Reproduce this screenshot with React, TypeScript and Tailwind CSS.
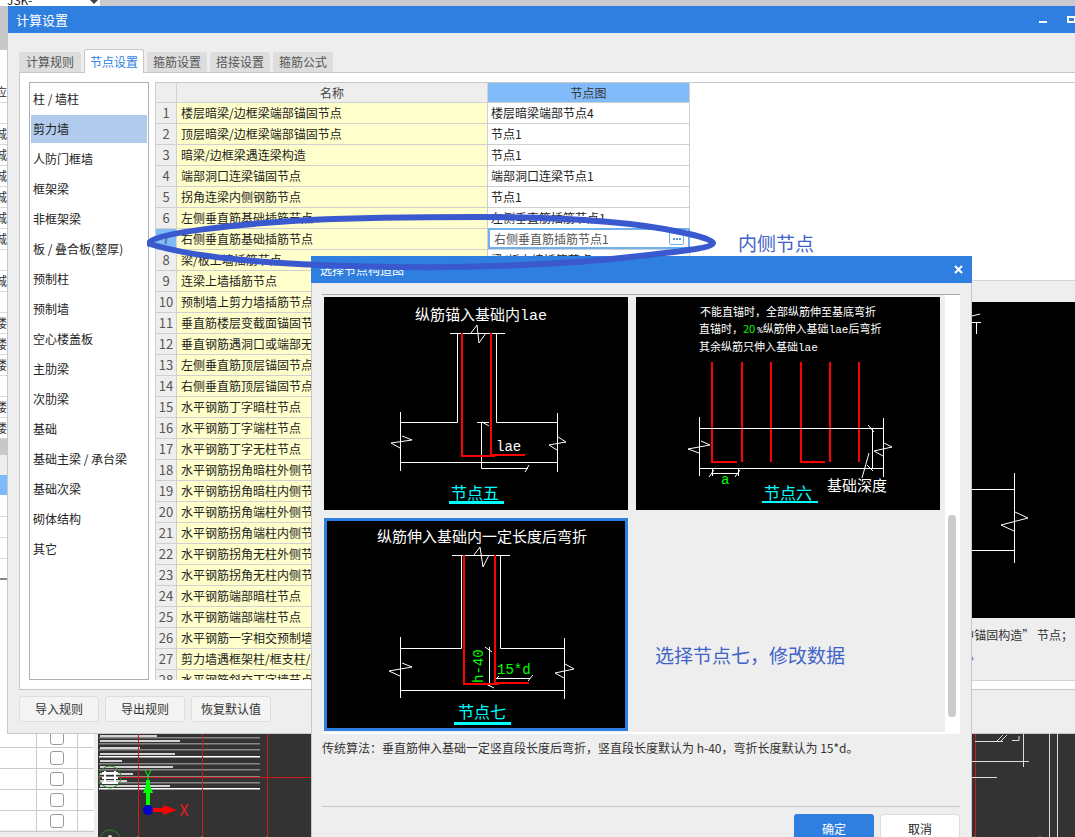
const leftRows = ["应", "", "城", "城", "城", "城", "城", "城", "", "城", "", "楼", "楼", "楼", "", "楼", "楼"];

const categories = [
  "柱 / 墙柱",
  "剪力墙",
  "人防门框墙",
  "框架梁",
  "非框架梁",
  "板 / 叠合板(整厚)",
  "预制柱",
  "预制墙",
  "空心楼盖板",
  "主肋梁",
  "次肋梁",
  "基础",
  "基础主梁 / 承台梁",
  "基础次梁",
  "砌体结构",
  "其它",
];

const nodeRows = [
  ["楼层暗梁/边框梁端部锚固节点", "楼层暗梁端部节点4"],
  ["顶层暗梁/边框梁端部锚固节点", "节点1"],
  ["暗梁/边框梁遇连梁构造", "节点1"],
  ["端部洞口连梁锚固节点", "端部洞口连梁节点1"],
  ["拐角连梁内侧钢筋节点", "节点1"],
  ["左侧垂直筋基础插筋节点", "左侧垂直筋插筋节点1"],
  ["右侧垂直筋基础插筋节点", "右侧垂直筋插筋节点1"],
  ["梁/板上墙插筋节点", "梁/板上墙插筋节点1"],
  ["连梁上墙插筋节点", "节点1"],
  ["预制墙上剪力墙插筋节点", "节点1"],
  ["垂直筋楼层变截面锚固节点", "节点1"],
  ["垂直钢筋遇洞口或端部无连梁节点", "节点1"],
  ["左侧垂直筋顶层锚固节点", "节点1"],
  ["右侧垂直筋顶层锚固节点", "节点1"],
  ["水平钢筋丁字暗柱节点", "节点1"],
  ["水平钢筋丁字端柱节点", "节点1"],
  ["水平钢筋丁字无柱节点", "节点1"],
  ["水平钢筋拐角暗柱外侧节点", "节点1"],
  ["水平钢筋拐角暗柱内侧节点", "节点1"],
  ["水平钢筋拐角端柱外侧节点", "节点1"],
  ["水平钢筋拐角端柱内侧节点", "节点1"],
  ["水平钢筋拐角无柱外侧节点", "节点1"],
  ["水平钢筋拐角无柱内侧节点", "节点1"],
  ["水平钢筋端部暗柱节点", "节点1"],
  ["水平钢筋端部端柱节点", "节点1"],
  ["水平钢筋一字相交预制墙节点", "节点1"],
  ["剪力墙遇框架柱/框支柱/端柱节点", "节点1"],
  ["水平钢筋斜交丁字墙节点", "节点1"],
];

const tabs = ["计算规则", "节点设置", "箍筋设置", "搭接设置", "箍筋公式"];

// legend rows in the cad drawing: [text bar y, text bar width, rule y, rule colour]
const legendRows: [number, number, number, string][] = [
  [735, 57, 737, "#888"],
  [740, 80, 743, "#888"],
  [747, 40, 749, "#888"],
  [753, 75, 756, "#fff"],
  [760, 22, 763, "#888"],
  [766, 73, 769, "#888"],
  [773, 33, 776, "#888"],
  [780, 27, 782, "#888"],
  [785, 70, 788, "#fff"],
];

const Lines = ({ stroke, width, items }: { stroke: string; width: number; items: string[] }) => (
  <g fill="none" stroke={stroke} strokeWidth={width}>
    {items.map((points) => (
      <polyline key={points} points={points} />
    ))}
  </g>
);

const NodeFive = () => (
  <svg width="304" height="213" viewBox="0 0 304 213" className="block bg-black">
    <text x="91" y="23" fill="#fff" fontSize="15" className="font-['Noto_Sans_CJK_SC',sans-serif]">纵筋锚入基础内<tspan className="font-['Liberation_Mono',monospace]">lae</tspan></text>
    <Lines
      stroke="#fff"
      width={1}
      items={[
        "126,36.5 181,36.5",
        "147,36 153,28 155,46 162,36",
        "133.5,36 133.5,125.5 76,125.5",
        "172.5,36 172.5,125.5 233,125.5",
        "76.5,115 76.5,174",
        "233.5,116 233.5,175",
        "76,165.5 233,165.5",
        "78,139 88,143 67,146 76,151",
        "234,140 242,145 225,148 233,153",
        "157.5,125 157.5,171.5 204,171.5",
        "153,125.5 165,125.5",
        "158,125 165,129",
        "205,168 201,175",
      ]}
    />
    <Lines stroke="#f00" width={2} items={["138,36 138,159 171,159", "167,36 167,158 201,158"]} />
    <text x="172" y="154" fill="#fff" fontSize="14" className="font-['Liberation_Mono',monospace]">lae</text>
    <text x="127" y="202" fill="#0ff" fontSize="16" className="font-['Noto_Sans_CJK_SC',sans-serif]">节点五</text>
    <rect x="125" y="204" width="55" height="3" fill="#0ff" />
  </svg>
);

const NodeSix = () => (
  <svg width="304" height="213" viewBox="0 0 304 213" className="block bg-black">
    <g fill="#fff" fontSize="11" className="font-['Noto_Sans_CJK_SC',sans-serif]">
      <text x="64" y="19">不能直锚时，全部纵筋伸至基底弯折</text>
      <text x="63" y="36">直锚时，<tspan fill="#0f0">20</tspan><tspan dx="2" fontSize="9" className="font-['Liberation_Mono',monospace]">%</tspan>纵筋伸入基础<tspan className="font-['Liberation_Mono',monospace]">lae</tspan>后弯折</text>
      <text x="63" y="54">其余纵筋只伸入基础<tspan className="font-['Liberation_Mono',monospace]">lae</tspan></text>
    </g>
    <Lines
      stroke="#f00"
      width={2}
      items={[
        "76,65 76,165 101,165",
        "106,65 106,165",
        "135,65 135,165",
        "165,65 165,165 189,165",
        "194,65 194,165",
        "223,65 223,165",
      ]}
    />
    <Lines
      stroke="#fff"
      width={1}
      items={[
        "63,131.5 247,131.5",
        "63,171.5 247,171.5",
        "63.5,120 63.5,179",
        "247.5,121 247.5,180",
        "236.5,131 236.5,171",
        "232,128 238,135",
        "231,168 237,174",
        "233,156 226,181",
        "65,144 74,148 52,152 63,156",
        "248,146 256,150 238,154 247,159",
        "76,176.5 102,176.5",
        "76.5,171 76.5,179",
        "102.5,171 102.5,179",
        "73,180 78,173",
        "99,180 104,173",
      ]}
    />
    <text x="85" y="187" fill="#0f0" fontSize="14" className="font-['Liberation_Mono',monospace]">a</text>
    <text x="128" y="202" fill="#0ff" fontSize="16" className="font-['Noto_Sans_CJK_SC',sans-serif]">节点六</text>
    <rect x="126" y="204" width="56" height="2" fill="#0ff" />
    <text x="191" y="194" fill="#fff" fontSize="15" className="font-['Noto_Sans_CJK_SC',sans-serif]">基础深度</text>
  </svg>
);

const NodeSeven = () => (
  <svg width="298" height="207" viewBox="3 3 298 207" className="block bg-black">
    <text x="53" y="24" fill="#fff" fontSize="15" className="font-['Noto_Sans_CJK_SC',sans-serif]">纵筋伸入基础内一定长度后弯折</text>
    <Lines
      stroke="#fff"
      width={1}
      items={[
        "128,37.5 186,37.5",
        "150,37 156,29 159,49 165,37",
        "137.5,37 137.5,130.5 76,130.5",
        "176.5,37 176.5,130.5 240,130.5",
        "76.5,119 76.5,180",
        "240.5,120 240.5,181",
        "76,172.5 240,172.5",
        "78,145 88,149 65,153 76,158",
        "241,146 250,151 231,155 240,160",
        "165.5,129 165.5,168",
        "161,129 168,134",
        "160,165 170,170",
        "171,160.5 206,160.5",
        "170,163 175,158",
        "204,163 209,157",
      ]}
    />
    <Lines stroke="#f00" width={2} items={["140,37 140,166 175,166", "171,37 171,165 205,165"]} />
    <text x="0" y="0" transform="translate(159 165) rotate(-90)" fill="#0f0" fontSize="14" className="font-['Liberation_Mono',monospace]">h-40</text>
    <text x="173" y="156" fill="#0f0" fontSize="14" className="font-['Liberation_Mono',monospace]">15*d</text>
    <text x="134" y="200" fill="#0ff" fontSize="16" className="font-['Noto_Sans_CJK_SC',sans-serif]">节点七</text>
    <rect x="130" y="204" width="57" height="3" fill="#0ff" />
  </svg>
);

const CadView = () => (
  <svg width="977" height="103" viewBox="98 734 977 103" className="absolute left-[98px] top-[734px] bg-[#333]">
    {legendRows.map(([textY, textWidth, ruleY, colour]) => (
      <g key={ruleY}>
        <rect x="99" y={ruleY} width="161" height="1.5" fill={colour} />
        <rect x="100" y={textY} width={textWidth} height="2" fill="#eee" opacity="0.85" />
      </g>
    ))}
    <Lines stroke="#d01818" width={1} items={["138.5,734 138.5,837", "202.5,734 202.5,837", "267.5,734 267.5,837", "98,777.5 311,777.5", "975.5,734 975.5,837"]} />
    <g fill="none" stroke="#2a8a2a">
      <circle cx="110" cy="777" r="11" />
      <circle cx="110" cy="840" r="10" />
    </g>
    <Lines stroke="#fff" width={2} items={["105,771 105,784", "115,771 115,784", "102,773 118,773", "102,778 118,778", "102,783 118,783"]} />
    <circle cx="110" cy="837" r="2" fill="#ddd" />
    <g fill="#1a9a1a">
      <circle cx="138" cy="838" r="2" />
      <circle cx="202" cy="838" r="2" />
      <circle cx="267" cy="838" r="2" />
      <circle cx="975" cy="838" r="2" />
      <circle cx="1040" cy="838" r="2" />
    </g>
    <rect x="146" y="780" width="4" height="25" fill="#0f0" />
    <polygon points="148,780 143,793 153,793" fill="#0f0" />
    <Lines stroke="#0f0" width={1} items={["145,770 148,776 151,770", "148,776 148,780"]} />
    <rect x="152" y="808" width="14" height="4" fill="#f00" />
    <polygon points="177,810 163,805 163,815" fill="#f00" />
    <circle cx="148" cy="810" r="5" fill="#0000c8" />
    <Lines stroke="#e02020" width={1.5} items={["181,804 188,816", "188,804 181,816"]} />
    <Lines
      stroke="#ddd"
      width={1}
      items={[
        "975,741.5 1003,741.5",
        "997,741 1003,735",
        "1001,741 1007,735",
        "1012,740.5 1019,740.5 1019,736",
        "1023.5,734 1023.5,767",
        "972,761.5 1029,761.5",
        "972,777.5 997,777.5",
        "1049.5,734 1049.5,837",
        "1057.5,734 1057.5,837",
      ]}
    />
  </svg>
);

const BehindWindow = () => (
  <div className="absolute left-[900px] top-[280px] w-[175px] h-[401px] bg-[#eee] border-t border-b border-[#d0d4da] pt-[21px]">
    <svg width="175" height="316" viewBox="900 302 175 316" className="block bg-black">
      <Lines
        stroke="#fff"
        width={1}
        items={[
          "972,316 980,314",
          "972,322.5 981,322.5",
          "976.5,322 976.5,334",
          "900,489.5 1014,489.5",
          "900,550.5 1014,550.5",
          "1014.5,473 1014.5,563",
          "1015,512 1028,518 1001,525 1014,531",
        ]}
      />
    </svg>
    <div className="mt-[8px] flex justify-end text-[12px] leading-[18px] text-[#333] pr-[2px] whitespace-nowrap">中锚固构造” 节点；</div>
    <div className="mt-[2px] pl-[69px] text-[12px] leading-[18px] text-[#333]">。</div>
  </div>
);

const Backdrop = () => (
  <>
    <div className="absolute left-0 top-0 w-full h-[6px] bg-[#c8cacd]" />
    <div className="absolute left-0 top-0 w-[100px] h-[6px] bg-white overflow-hidden flex">
      <span className="ml-[7px] -mt-[8px] text-[12px] leading-[16px] text-[#222]">JSK-</span>
      <span className="absolute left-[90px] top-0 w-0 h-0 border-x-[4px] border-t-[4px] border-x-transparent border-t-[#444]" />
    </div>
    <div className="absolute left-0 top-[6px] w-[7px] h-[76px] bg-white flex flex-col">
      <div className="h-[44px] bg-[#c8c8c8]" />
    </div>
    <div className="absolute left-0 top-[82px] w-[7px] bg-white flex flex-col">
      {leftRows.map((label, i) => (
        <div key={i} className="h-[21px] flex items-center justify-end overflow-hidden border-b border-[#d8d8d8] text-[12px] text-[#333]">
          <span className="shrink-0">{label}</span>
        </div>
      ))}
      <div className="h-[16px] bg-[#c8c8c8]" />
      <div className="h-[20px] bg-[#eee]" />
      <div className="h-[20px] bg-[#7ebafa]" />
      <div className="h-[22px] border-b border-[#d8d8d8]" />
      <div className="h-[21px] border-b border-[#d8d8d8]" />
      <div className="h-[21px] border-b border-[#d8d8d8]" />
      <div className="h-[21px] border-b-2 border-[#888]" />
    </div>
    <div className="absolute left-0 top-[734px] w-[98px] h-[103px] bg-[#eee]">
      <div className="w-[94px] h-[96px] bg-white">
        {[0, 1, 2, 3, 4].map((i) => (
          <div key={i} className={`${i === 0 ? "h-[14px]" : "h-[21px]"} flex border-b border-[#ccc]`}>
            <div className="w-[37px] border-r border-[#ccc]" />
            <div className="w-[41px] border-r border-[#ccc] flex items-center justify-center overflow-visible">
              <span className={`w-[14px] h-[14px] shrink-0 rounded-[3px] border border-[#999] bg-white ${i === 0 ? "-mt-[6px]" : ""}`} />
            </div>
          </div>
        ))}
      </div>
    </div>
  </>
);

const SettingsWindow = () => (
  <div className="absolute left-[7px] top-[6px] right-0 h-[728px] bg-[#eee] border-l border-b border-[#c0c8d4] flex flex-col overflow-hidden">
    <div className="h-[27px] shrink-0 bg-[#2e7fe0] text-white text-[13px] flex items-center pl-[8px] relative">
      计算设置
      <span className="absolute left-[1031px] top-[15px] w-[8px] h-[2px] bg-white" />
      <span className="absolute left-[1059px] top-[10px] w-[9px] h-[7px] border-2 border-white" />
    </div>
    <div className="h-[39px] shrink-0 flex items-end gap-[3px] pl-[11px]">
      {tabs.map((tab, i) => (
        <div
          key={tab}
          className={
            i === 1
              ? "w-[60px] h-[24px] -mb-[1px] z-10 bg-white border border-b-0 border-[#c8c8c8] rounded-t-[3px] text-[#2e7fe0] text-[12px] flex items-center justify-center"
              : i === 0
                ? "w-[62px] h-[20px] bg-[#ddd] rounded-t-[3px] text-[#555] text-[12px] flex items-center justify-center"
                : "w-[60px] h-[20px] bg-[#ddd] rounded-t-[3px] text-[#555] text-[12px] flex items-center justify-center"
          }
        >
          {tab}
        </div>
      ))}
    </div>
    <div className="ml-[11px] h-[618px] shrink-0 bg-white border-t border-b border-l border-[#c8c8c8] pt-[9px] pl-[9px] flex gap-[6px]">
      <div className="w-[120px] h-[598px] shrink-0 border border-[#b0b0b0] pt-[1px] text-[12px] text-[#222]">
        {categories.map((name, i) => (
          <div
            key={name}
            className={
              i === 1
                ? "mx-[1px] h-[28px] my-[1px] pl-[2px] bg-[#b0cbeb] flex items-center"
                : "mx-[1px] h-[30px] pl-[2px] flex items-center"
            }
          >
            {name}
          </div>
        ))}
      </div>
      <div className="flex-1 h-[598px] border-t border-[#c8c8c8] overflow-hidden">
        <div className="w-[535px] h-full overflow-hidden text-[12px] text-[#222]">
          <div className="h-[20px] flex border-b border-[#d0d0d0]">
            <div className="w-[22px] bg-[#eee] border-x border-[#d0d0d0]" />
            <div className="w-[311px] bg-[#eee] border-r border-[#d0d0d0] flex items-center justify-center text-[#444]">名称</div>
            <div className="w-[202px] bg-[#82bbf9] border-r border-[#d0d0d0] flex items-center justify-center text-[#333]">节点图</div>
          </div>
          {nodeRows.map(([name, node], i) => (
            <div key={i} className="h-[21px] flex border-b border-[#d0d0d0]">
              <div className={`w-[22px] shrink-0 border-x border-[#d0d0d0] flex items-center justify-center text-[13px] text-[#555] ${i === 6 ? "bg-[#7ebafa]" : "bg-[#eee]"}`}>
                {i + 1}
              </div>
              <div className="w-[311px] shrink-0 bg-[#ffffcc] border-r border-[#d0d0d0] pl-[4px] flex items-center whitespace-nowrap overflow-hidden">{name}</div>
              {i === 6 ? (
                <div className="w-[202px] shrink-0 -mt-[1px] h-[21px] border-2 border-[#6fb0ee] bg-white pl-[4px] pr-[4px] flex items-center justify-between text-[#555]">
                  {node}
                  <span className="w-[15px] h-[13px] rounded-[2px] border border-[#6fb0ee] flex items-center justify-center gap-[1px]">
                    <i className="w-[2px] h-[2px] bg-[#5a9be0]" />
                    <i className="w-[2px] h-[2px] bg-[#5a9be0]" />
                    <i className="w-[2px] h-[2px] bg-[#5a9be0]" />
                  </span>
                </div>
              ) : (
                <div className="w-[202px] shrink-0 bg-white border-r border-[#d0d0d0] pl-[3px] flex items-center whitespace-nowrap">{node}</div>
              )}
            </div>
          ))}
        </div>
      </div>
    </div>
    <div className="pl-[11px] pt-[6px] flex gap-[6px]">
      {["导入规则", "导出规则", "恢复默认值"].map((label) => (
        <button
          key={label}
          type="button"
          className="w-[80px] h-[26px] rounded-[3px] border border-[#ddd] bg-[#f4f4f4] text-[12px] text-[#333]"
        >
          {label}
        </button>
      ))}
    </div>
  </div>
);

const NodePicker = () => (
  <div className="absolute left-[311px] top-[256px] w-[661px] h-[590px] bg-[#eee] border-x border-[#c0c8d4] flex flex-col">
    <div className="h-[27px] shrink-0 -mx-[1px] bg-[#2e7fe0] text-white text-[12px] flex items-center justify-between pl-[9px] pr-[9px]">
      选择节点构造图
      <svg width="9" height="9" viewBox="0 0 9 9" stroke="#fff" strokeWidth="2">
        <path d="M1 1 8 8M8 1 1 8" />
      </svg>
    </div>
    <div className="mt-[11px] ml-[10px] w-[638px] h-[440px] shrink-0 border-t border-b-2 border-t-[#aaa] border-b-white flex justify-between overflow-hidden">
      <div className="pl-[2px] pt-[2px] grid grid-cols-[304px_304px] gap-x-[8px] gap-y-[8px] content-start">
        <NodeFive />
        <NodeSix />
        <div className="w-[304px] h-[213px] border-[3px] border-[#2e7fe0]">
          <NodeSeven />
        </div>
      </div>
      <div className="w-[15px] bg-white pt-[220px] pl-[3px]">
        <div className="w-[8px] h-[202px] rounded-full bg-[#ccc]" />
      </div>
    </div>
    <p className="ml-[10px] mt-[5px] text-[12px] leading-[18px] text-[#333] whitespace-nowrap">
      传统算法：垂直筋伸入基础一定竖直段长度后弯折，竖直段长度默认为 h-40，弯折长度默认为 15*d。
    </p>
    <div className="ml-[10px] mt-[49px] w-[638px] border-t border-[#c8c8c8]" />
    <div className="mt-[7px] ml-[482px] flex gap-[6px]">
      <button type="button" className="w-[80px] h-[30px] rounded-[3px] bg-[#2e7fe0] text-white text-[12px]">确定</button>
      <button type="button" className="w-[80px] h-[30px] rounded-[3px] bg-white border border-[#ddd] text-[#222] text-[12px]">取消</button>
    </div>
  </div>
);

const App = () => {
  return (
    <div className="relative w-[1075px] h-[837px] overflow-hidden bg-white font-['Noto_Sans_CJK_SC',sans-serif]">
      <Backdrop />
      <CadView />
      <SettingsWindow />
      <BehindWindow />
      <NodePicker />
      <svg width="1075" height="837" className="absolute left-0 top-0 pointer-events-none">
        <path
          d="M150 242C158 233 235 224 310 220C370 217 430 217 480 217C550 217 630 221 680 232C700 236 712 240 713 243C712 248 685 251 630 257C570 264 480 268 400 267C300 266 205 261 150 244Z"
          fill="none"
          stroke="#3a59cf"
          strokeWidth="6"
        />
      </svg>
      <span className="absolute left-[738px] top-[230px] text-[19px] leading-[26px] text-[#3e63c9]">内侧节点</span>
      <span className="absolute left-[655px] top-[642px] text-[19px] leading-[26px] text-[#3e63c9]">选择节点七，修改数据</span>
    </div>
  );
};

export default App;
